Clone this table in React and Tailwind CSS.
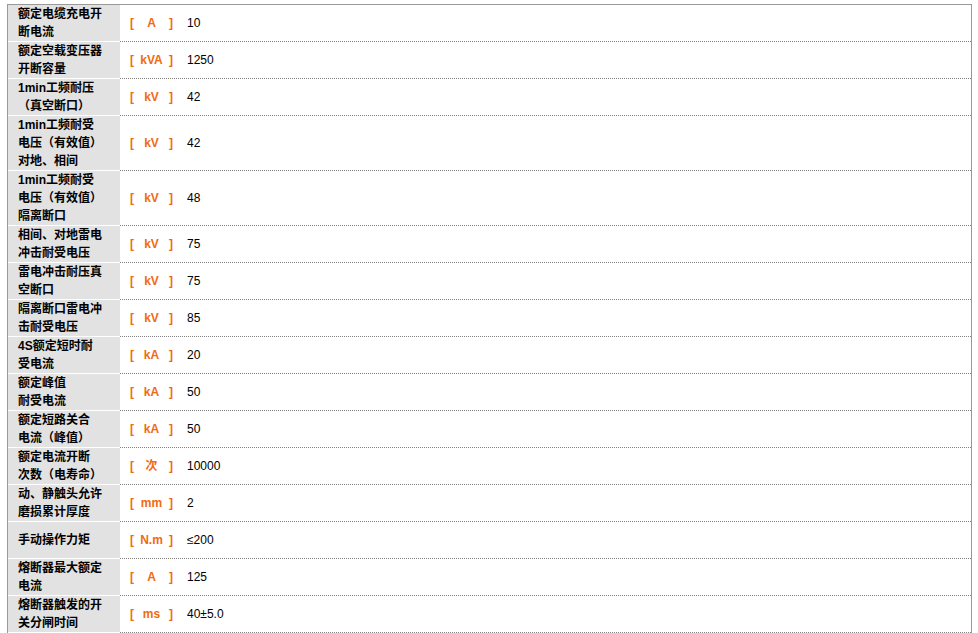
const rows = [
  { name: ["额定电缆充电开", "断电流"], unit: "A", value: "10" },
  { name: ["额定空载变压器", "开断容量"], unit: "kVA", value: "1250" },
  { name: ["1min工频耐压", "（真空断口）"], unit: "kV", value: "42" },
  { name: ["1min工频耐受", "电压（有效值）", "对地、相间"], unit: "kV", value: "42" },
  { name: ["1min工频耐受", "电压（有效值）", "隔离断口"], unit: "kV", value: "48" },
  { name: ["相间、对地雷电", "冲击耐受电压"], unit: "kV", value: "75" },
  { name: ["雷电冲击耐压真", "空断口"], unit: "kV", value: "75" },
  { name: ["隔离断口雷电冲", "击耐受电压"], unit: "kV", value: "85" },
  { name: ["4S额定短时耐", "受电流"], unit: "kA", value: "20" },
  { name: ["额定峰值", "耐受电流"], unit: "kA", value: "50" },
  { name: ["额定短路关合", "电流（峰值）"], unit: "kA", value: "50" },
  { name: ["额定电流开断", "次数（电寿命）"], unit: "次", value: "10000" },
  { name: ["动、静触头允许", "磨损累计厚度"], unit: "mm", value: "2" },
  { name: ["手动操作力矩"], unit: "N.m", value: "≤200" },
  { name: ["熔断器最大额定", "电流"], unit: "A", value: "125" },
  { name: ["熔断器触发的开", "关分闸时间"], unit: "ms", value: "40±5.0" },
]

function SpecRow({ row }) {
  return (
    <div className="flex">
      {/* parameter name */}
      <div className="w-[112px] shrink-0 bg-[#e2e2e2] border-b border-white pl-[10px] min-h-[37px] flex flex-col justify-center">
        {row.name.map((line, i) => (
          <div key={i} className="h-[18px] leading-[18px] text-[12px] font-bold text-black whitespace-nowrap">
            {line}
          </div>
        ))}
      </div>
      {/* unit + value */}
      <div className="flex-1 flex items-center border-b border-dotted border-[#808080]">
        {row.unit && (
          <>
            <div className="ml-[10px] w-[43px] flex items-center justify-between text-[12px] font-bold text-[#f26a10]">
              <span>[</span>
              <span>{row.unit}</span>
              <span>]</span>
            </div>
            <div className="ml-[14px] text-[12px] text-black">{row.value}</div>
          </>
        )}
      </div>
    </div>
  )
}

export default function App() {
  return (
    <div className="bg-white w-[978px] h-[633px] overflow-hidden pt-[4px] pl-[7px] font-['Liberation_Sans','Noto_Sans_CJK_SC',sans-serif]">
      <div className="w-[965px] border-t border-l border-r border-[#999]">
        {rows.map((row, i) => (
          <SpecRow key={i} row={row} />
        ))}
        {/* next row, cut off by the window */}
        <SpecRow row={{ name: [], unit: null, value: null }} />
      </div>
    </div>
  )
}
